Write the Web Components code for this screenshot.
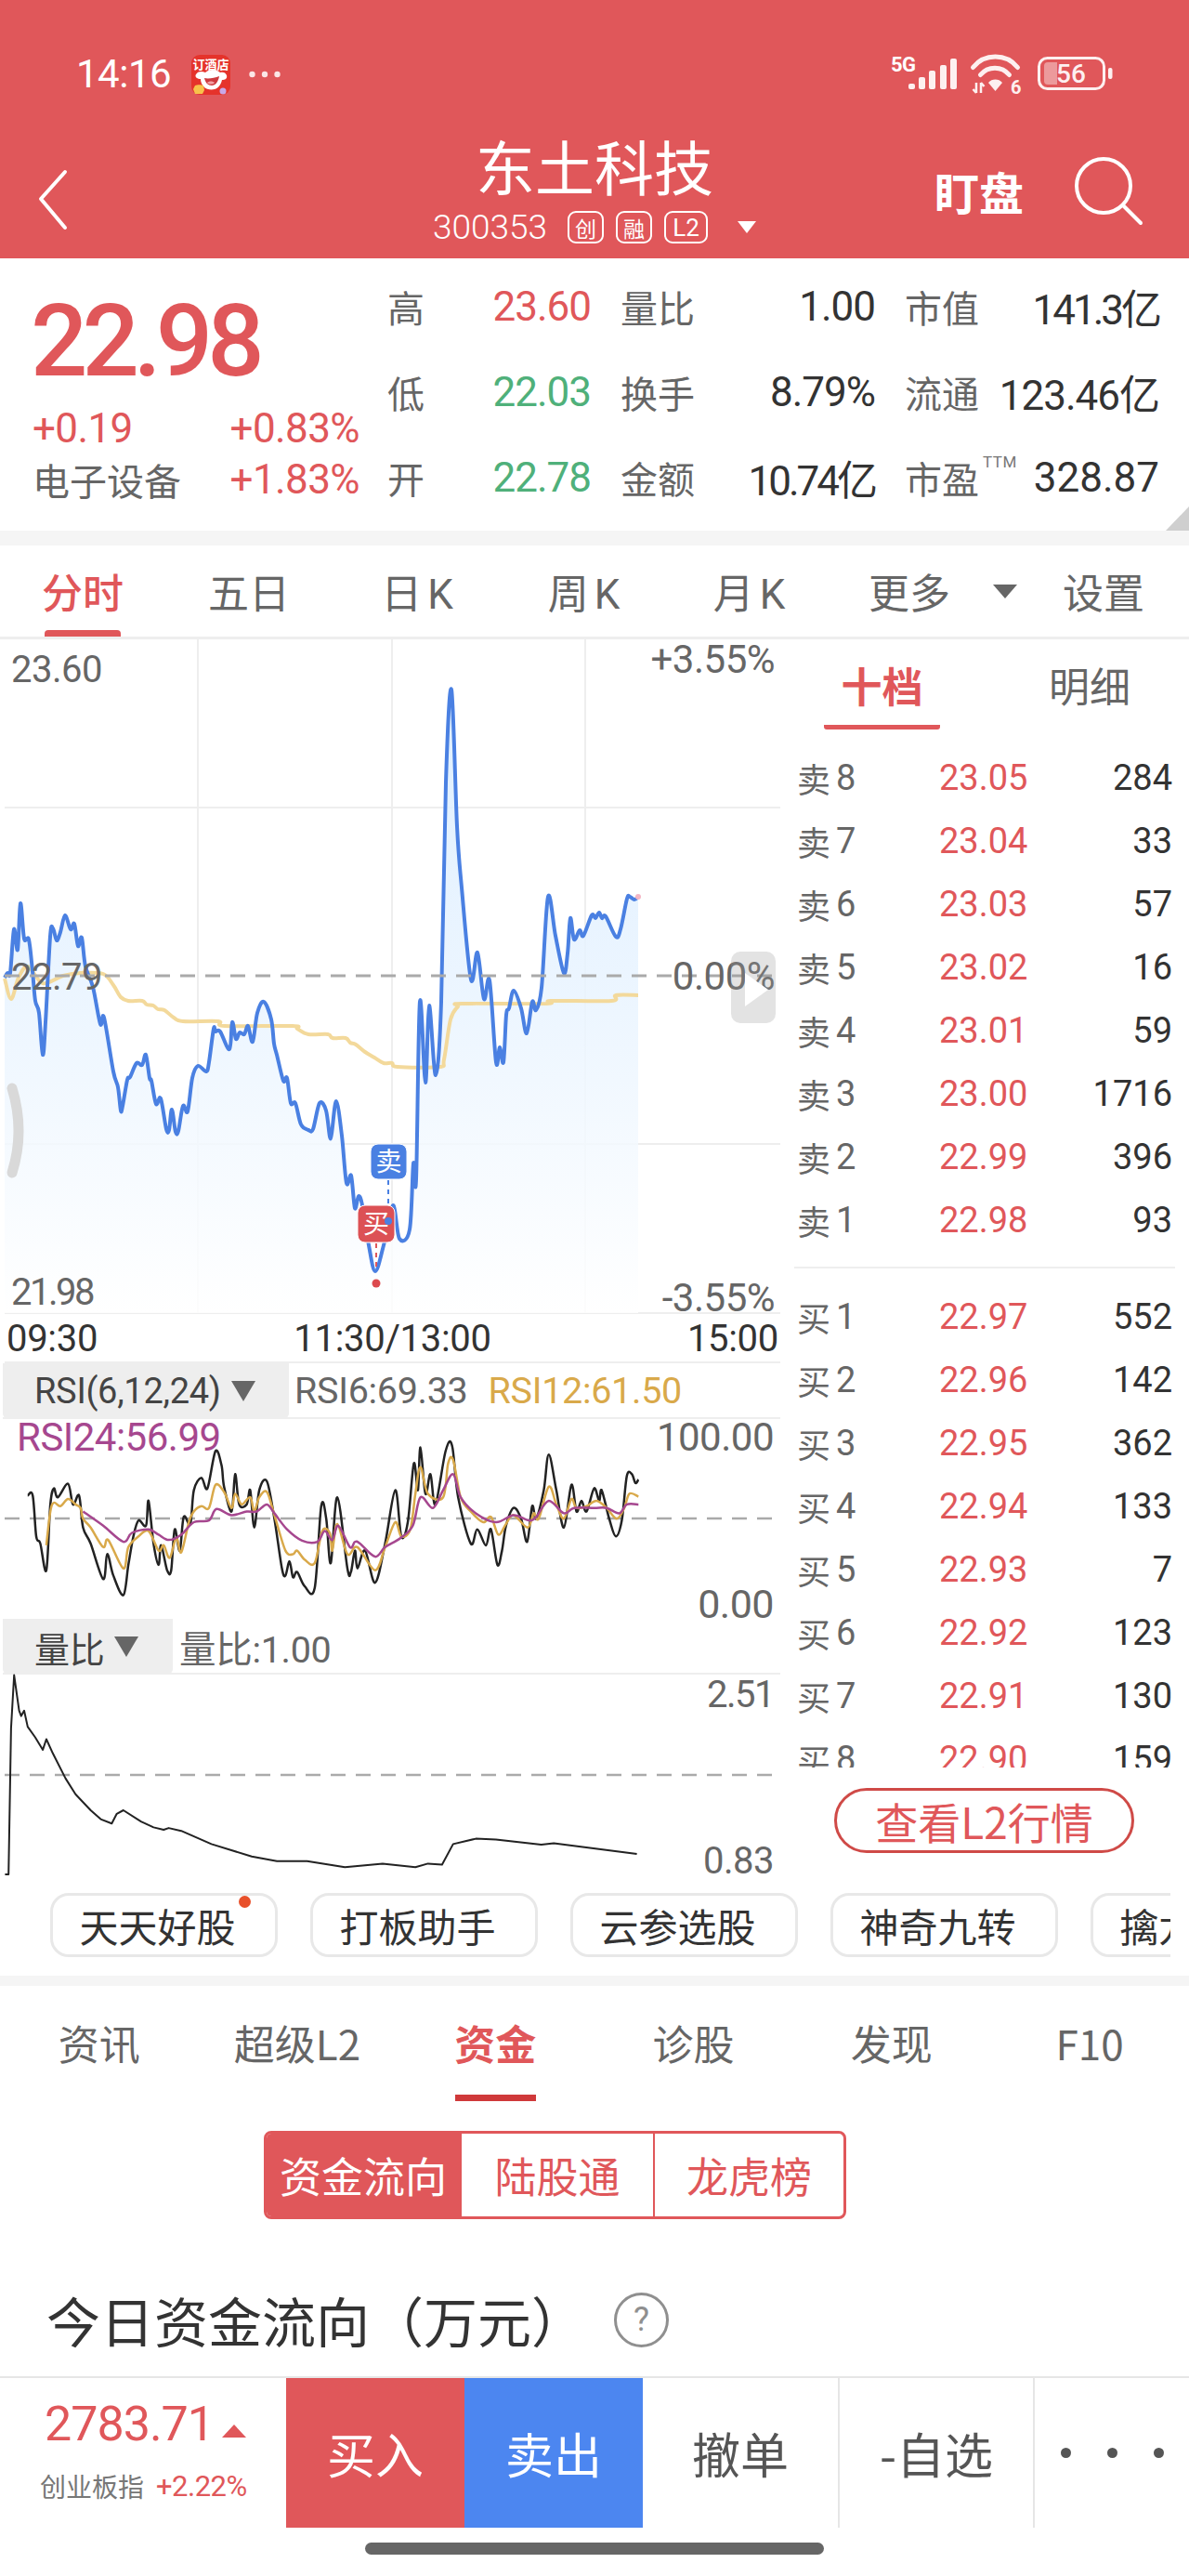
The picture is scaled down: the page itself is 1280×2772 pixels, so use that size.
<!DOCTYPE html>
<html lang="zh">
<head>
<meta charset="utf-8">
<title>东土科技</title>
<style>
  html, body { margin: 0; padding: 0; background: #fff; }
  body { width: 1280px; height: 2772px; overflow: hidden; font-family: Roboto, "Noto Sans CJK SC", sans-serif; color: #333; }
</style>
</head>
<body>
<stock-top></stock-top>
<quote-panel></quote-panel>
<period-tabs></period-tabs>
<chart-board>
  <price-chart slot="main"></price-chart>
  <time-axis slot="main"></time-axis>
  <indicator-panel slot="main" kind="rsi"></indicator-panel>
  <indicator-panel slot="main" kind="vol"></indicator-panel>
  <order-book slot="side"></order-book>
</chart-board>
<tool-chips>
  <tool-chip dot>天天好股</tool-chip>
  <tool-chip>打板助手</tool-chip>
  <tool-chip>云参选股</tool-chip>
  <tool-chip>神奇九转</tool-chip>
  <tool-chip>擒龙追涨</tool-chip>
</tool-chips>
<detail-tabs></detail-tabs>
<fund-section></fund-section>
<trade-bar></trade-bar>

<script>
const FONT = 'Roboto, "Noto Sans CJK SC", sans-serif';
const RED = '#E0575A';

// coordinates below were read off the reference, each curve in its own crop scale
const points = (raw, fx = v => v, fy = v => v) =>
  raw.trim().split(/\s+/).map(p => p.split(',').map(Number)).map(([x, y]) => [fx(x), fy(y)]);

// catmull-rom through the read points, the app draws its curves rounded
const smooth = pts => {
  let d = `M${pts[0][0].toFixed(1)} ${pts[0][1].toFixed(1)}`;
  for (let i = 0; i < pts.length - 1; i++) {
    const p0 = pts[i - 1] || pts[i], p1 = pts[i], p2 = pts[i + 1], p3 = pts[i + 2] || p2;
    const c1 = [p1[0] + (p2[0] - p0[0]) / 6, p1[1] + (p2[1] - p0[1]) / 6];
    const c2 = [p2[0] - (p3[0] - p1[0]) / 6, p2[1] - (p3[1] - p1[1]) / 6];
    d += `C${c1[0].toFixed(1)} ${c1[1].toFixed(1)} ${c2[0].toFixed(1)} ${c2[1].toFixed(1)} ${p2[0].toFixed(1)} ${p2[1].toFixed(1)}`;
  }
  return d;
};
const straight = pts => 'M' + pts.map(p => `${p[0].toFixed(1)} ${p[1].toFixed(1)}`).join('L');

const BLUE_LINE = `5,1052 8,1047 11,1047 15,1000 19,1022 22,972 26,1010 31,1011 35,1045 38,1077 42,1090 46,1135 49,1100 54,1008 57,999 61,1012 65,1003
 70,985 76,1000 80,994 84,1018 88,1009 92,1040 100,1062 108,1102 112,1095 122,1153 127,1170 130,1195 132,1190 137,1162 140,1159 147,1144 153,1146 157,1135
 161,1160 163,1163 168,1188 173,1182 179,1215 182,1216 185,1194 189,1218 192,1217 197,1190 202,1196 207,1160 213,1147 222,1153 225,1143 230,1107 232,1110
 237,1110 247,1129 250,1100 254,1118 258,1111 263,1113 267,1104 272,1121 277,1090 284,1078 292,1097 295,1123 298,1135 305,1163 309,1160 313,1187 318,1187
 324,1210 332,1216 337,1215 344,1187 351,1195 355,1223 357,1220 362,1185 368,1222 373,1273 378,1265 382,1300 386,1287 390,1297 397,1340 404,1368 413,1340
 423,1297 430,1333 441,1323 445,1252 448,1269 452,1078 458,1165 462,1082 469,1157 475,1078 480,842 486,742 492,889 497,955 507,1054 514,1025 521,1075
 527,1055 534,1143 538,1127 542,1143 545,1092 548,1085 553,1066 561,1085 567,1112 573,1078 577,1087 583,1063 590,965 598,1007 607,1047 611,1026 614,988
 618,1011 624,1001 628,1007 637,985 641,988 645,982 648,988 652,986 663,1008 668,1000 675,967 678,965 683,968 687,965`;

const AVG_LINE = `5,1053 12,1075 20,1052 30,1040 46,1058 68,1050 87,1047 111,1048 122,1060 130,1073 138,1077 153,1077 158,1081 165,1082 170,1086 177,1087 187,1095
 197,1099 235,1099 242,1104 315,1104 320,1107 332,1113 353,1113 358,1117 372,1117 377,1122 383,1124 393,1132 403,1138 413,1144 422,1144 428,1148 473,1148
 478,1140 485,1097 493,1083 497,1080 588,1080 593,1077 658,1077 663,1071 687,1071`;

const RSI6 = `55,445 65,445 72,560 80,580 92,655 100,470 107,425 115,450 135,412 145,470 157,445 165,535 180,580 205,680 213,610 225,670 245,725 255,640 265,560 275,515
 290,530 295,460 305,580 315,640 320,585 332,655 340,655 347,540 357,600 365,505 378,525 385,430 400,395 412,425 428,320 440,360 445,420 460,490 467,385 475,470
 490,470 497,430 505,535 515,430 530,405 545,510 560,650 567,670 575,630 582,675 590,660 605,700 625,705 638,475 648,510 657,635 670,450 690,650 697,660 705,600
 710,650 725,600 745,690 765,580 785,430 797,560 810,520 822,355 830,430 835,310 845,440 855,385 865,470 885,320 898,305 910,450 935,580 948,540 965,585 975,540
 988,640 997,600 1005,530 1020,480 1035,510 1047,575 1057,475 1065,510 1080,430 1090,330 1105,430 1120,535 1135,415 1145,490 1155,460 1165,490 1180,425 1190,460
 1195,430 1210,510 1223,560 1235,515 1245,390 1255,385 1262,410 1268,400`;
const RSI12 = `92,585 100,490 107,465 120,475 135,455 150,470 160,480 165,510 180,535 205,590 215,570 245,650 255,590 275,560 295,545 315,600 325,585 337,620 350,565 360,605
 375,520 385,490 400,475 415,480 428,415 445,435 460,480 467,440 480,470 497,450 505,490 515,450 530,435 545,500 567,600 582,610 590,600 605,625 625,635 640,545
 655,550 660,600 670,525 690,610 710,590 745,655 765,590 785,520 797,560 815,540 825,440 835,365 850,440 880,450 890,355 900,345 915,450 935,490 960,520 975,505
 990,555 1005,525 1020,500 1048,535 1060,495 1070,510 1090,420 1105,470 1120,510 1135,455 1145,480 1165,475 1185,460 1205,480 1225,510 1240,480 1250,440 1268,448`;
const RSI24 = `165,490 205,530 245,575 262,550 295,540 315,555 335,570 360,555 385,520 415,515 430,483 460,500 490,490 510,490 530,470 545,495 570,540 600,572 630,575 645,545
 660,570 672,530 695,590 705,575 715,580 745,617 765,590 795,565 820,530 835,450 860,480 880,430 900,385 915,450 945,495 985,520 1020,500 1050,515 1065,505 1090,460
 1120,495 1140,480 1180,480 1205,480 1230,495 1245,470 1268,470`;
const VOL = `10,1510 17,1510 22,1100 28,950 38,1050 42,1065 48,1050 55,1095 70,1125 85,1160 92,1130 105,1170 130,1240 150,1285 180,1330 200,1355 222,1367 232,1340 245,1330
 280,1362 305,1378 325,1385 335,1380 360,1388 420,1425 500,1460 550,1473 610,1473 685,1490 760,1480 825,1490 850,1480 878,1483 900,1425 945,1410 985,1412
 1075,1427 1100,1423 1265,1453`;

class StockTop extends HTMLElement {
  connectedCallback() {
    this.attachShadow({ mode: 'open' });
    this.shadowRoot.innerHTML = `
      <style>
        :host { display: block; background: ${RED}; color: #fff; height: 278px; font-family: ${FONT}; }
        .status { height: 140px; display: flex; justify-content: space-between; align-items: flex-start; padding: 58px 82px 0 82px; box-sizing: border-box; }
        .left, .right { display: flex; align-items: center; }
        .time { font-size: 42px; line-height: 44px; letter-spacing: -0.5px; }
        .app { margin-left: 22px; }
        .dots { margin-left: 20px; }
        svg { overflow: visible; }
        .nav { height: 138px; display: grid; grid-template-columns: 1fr auto 1fr; }
        .back { padding: 43px 0 0 41px; }
        .mid { display: flex; flex-direction: column; align-items: center; padding-top: 12px; }
        .title { font-size: 64px; line-height: 64px; }
        .code { display: flex; align-items: center; margin-top: 11px; height: 35px; }
        .code b { font-weight: 300; font-size: 37px; margin-right: 22px; }
        .tag { box-sizing: border-box; height: 35px; width: 39px; border: 2px solid #fff; border-radius: 9px; font-size: 23px; display: flex; align-items: center; justify-content: center; margin-right: 13px; }
        .tag.l2 { width: 47px; font-size: 26px; margin-right: 32px; }
        .tri { width: 0; height: 0; border-left: 10px solid transparent; border-right: 10px solid transparent; border-top: 13px solid #fff; }
        .act { display: flex; justify-content: flex-end; align-items: flex-start; padding: 29px 50px 0 0; }
        .watch { font-size: 48px; font-weight: 700; line-height: 56px; margin: 13px 55px 0 0; }
      </style>
      <div class="status">
        <div class="left">
          <span class="time">14:16</span>
          <svg class="app" width="42" height="43" viewBox="0 0 42 43">
            <rect width="42" height="43" rx="9" fill="#E5332B"/>
            <text x="21" y="15" font-size="13" fill="#fff" text-anchor="middle" font-family="Noto Sans CJK SC, sans-serif" font-weight="700">订酒店</text>
            <path d="M5 21c3-4 7-3 10-2 4-4 12-4 16 0 3-1 6 0 7 3 1 4-2 5-5 5-1 5-4 9-8 10-4 1-9 0-11-2-3-3-4-6-4-9-3 0-7-2-5-5z" fill="#fff"/>
            <path d="M14 25c4 1 11 0 16-2-1 6-4 10-8 10s-7-3-8-8z" fill="#CE3A3E"/>
            <path d="M17 30c2-2 6-2 8 0-2 2-6 2-8 0z" fill="#F3A0A4"/>
            <path d="M2 37l2-4c2-1 7-1 9 0l1 5-2 4H4z" fill="#F7C24B"/>
            <circle cx="34" cy="39" r="3.500" fill="#C9A8E8"/>
          </svg>
          <svg class="dots" width="34" height="8" viewBox="0 0 34 8"><circle cx="3.500" cy="4" r="3.200" fill="#FBE6E6"/><circle cx="17" cy="4" r="3.200" fill="#FBE6E6"/><circle cx="30.500" cy="4" r="3.200" fill="#FBE6E6"/></svg>
        </div>
        <div class="right">
          <svg width="239" height="44" viewBox="959 60 239 44" fill="none" stroke="#fff">
            <text x="959" y="79" font-size="22" font-weight="700" fill="#fff" stroke="none" font-family="Roboto, sans-serif" letter-spacing="-0.5">5G</text>
            <g fill="#FDF0F0" stroke="none">
              <rect x="978" y="92" width="7" height="6" rx="2"/>
              <rect x="989" y="85" width="7" height="13" rx="2"/>
              <rect x="1000" y="78" width="7" height="20" rx="2"/>
              <rect x="1012" y="72" width="7" height="26" rx="2"/>
              <rect x="1023" y="65" width="7" height="33" rx="2"/>
            </g>
            <g stroke="#FDF0F0" stroke-width="5" stroke-linecap="round">
              <path d="M1047.500 74.500a31 31 0 0 1 48 0"/>
              <path d="M1055.500 82.500a20 20 0 0 1 31 0"/>
            </g>
            <path d="M1064 91a10 10 0 0 1 15 0l-7.500 9z" fill="#FDF0F0" stroke="none"/>
            <path d="M1051 91v11M1047.500 98l3.500 4M1056 102V91M1056 91l3.500 4" stroke="#FDF0F0" stroke-width="2.500"/>
            <text x="1088" y="103" font-size="20" font-weight="700" fill="#FDF0F0" stroke="none" font-family="Roboto, sans-serif">6</text>
            <rect x="1118.500" y="64.500" width="70" height="33" rx="9" stroke="#FDF0F0" stroke-width="3"/>
            <path d="M1128 69h10v24h-10a4 4 0 0 1-4-4V73a4 4 0 0 1 4-4z" fill="#fff" fill-opacity=".4" stroke="none"/>
            <text x="1153" y="91" font-size="28" font-weight="500" text-anchor="middle" fill="#FDF0F0" stroke="none" font-family="Roboto, sans-serif">56</text>
            <rect x="1193" y="75" width="4.500" height="12" rx="2" fill="#FDF0F0" stroke="none"/>
          </svg>
        </div>
      </div>
      <div class="nav">
        <div class="back">
          <svg width="32" height="64" viewBox="0 0 32 64" fill="none" stroke="#fff" stroke-width="4" stroke-linecap="round" stroke-linejoin="round"><path d="M29 2L3 31l26 31"/></svg>
        </div>
        <div class="mid">
          <div class="title">东土科技</div>
          <div class="code"><b>300353</b><span class="tag">创</span><span class="tag">融</span><span class="tag l2">L2</span><span class="tri"></span></div>
        </div>
        <div class="act">
          <span class="watch">盯盘</span>
          <svg width="73" height="73" viewBox="0 0 73 73" fill="none" stroke="#fff" stroke-width="4" stroke-linecap="round"><circle cx="31" cy="31" r="29"/><path d="M52 52l19 19"/></svg>
        </div>
      </div>`;
  }
}

class QuotePanel extends HTMLElement {
  connectedCallback() {
    this.attachShadow({ mode: 'open' });
    const stat = (k, v, c = '') => `<div class="cell"><span class="k">${k}</span><span class="v ${c}">${v}</span></div>`;
    this.shadowRoot.innerHTML = `
      <style>
        :host { display: block; position: relative; height: 293px; box-sizing: border-box; font-family: ${FONT}; background: #fff; }
        .wrap { display: grid; grid-template-columns: 352px 1fr; padding-left: 35px; }
        .price { font-size: 108px; line-height: 96px; font-weight: 500; color: ${RED}; letter-spacing: -6px; margin-top: 41px; margin-left: -2px; }
        .sub { display: flex; justify-content: space-between; align-items: center; color: ${RED}; font-size: 44px; letter-spacing: -0.6px; height: 44px; }
        .sub.one { margin-top: 24px; }
        .sub.two { margin-top: 11px; }
        .sub .cn { color: #666; font-family: "Noto Sans CJK SC", sans-serif; letter-spacing: 0; font-size: 40px; }
        .stats { display: grid; grid-template-columns: 219px 274px 274px; column-gap: 32px; grid-auto-rows: 92px; margin: 6px 0 0 30px; }
        .cell { display: flex; justify-content: space-between; align-items: center; }
        .k { font-family: "Noto Sans CJK SC", sans-serif; font-size: 40px; color: #666; position: relative; white-space: nowrap; }
        .k sup { position: absolute; left: 84px; top: 2px; font-size: 17px; font-family: Roboto, sans-serif; line-height: 20px; color: #777; letter-spacing: .5px; }
        .v { font-size: 44px; letter-spacing: -1px; color: #333; white-space: nowrap; }
        .v.up { color: ${RED}; }
        .v.dn { color: #4FB07A; }
        .v.tight { letter-spacing: -3px; }
        .v.wide { letter-spacing: 0; }
        .corner { position: absolute; right: 0; bottom: 0; width: 0; height: 0; border-left: 25px solid transparent; border-bottom: 26px solid #CFCFCF; }
      </style>
      <div class="wrap">
        <div>
          <div class="price">22.98</div>
          <div class="sub one"><span>+0.19</span><span>+0.83%</span></div>
          <div class="sub two"><span class="cn">电子设备</span><span>+1.83%</span></div>
        </div>
        <div class="stats">
          ${stat('高', '23.60', 'up')}${stat('量比', '1.00')}${stat('市值', '141.3亿', 'tight')}
          ${stat('低', '22.03', 'dn')}${stat('换手', '8.79%')}${stat('流通', '123.46亿')}
          ${stat('开', '22.78', 'dn')}${stat('金额', '10.74亿', 'tight')}${stat('市盈<sup>TTM</sup>', '328.87', 'wide')}
        </div>
      </div>
      <div class="corner"></div>`;
  }
}

class PeriodTabs extends HTMLElement {
  connectedCallback() {
    this.attachShadow({ mode: 'open' });
    this.shadowRoot.innerHTML = `
      <style>
        :host { display: block; border-top: 16px solid #F5F5F5; border-bottom: 3px solid #EEE; height: 98px; background: #fff; font-family: Roboto, "Noto Sans CJK SC", sans-serif; }
        .row { display: grid; grid-template-columns: 178px 180px 182px 177px 179px 238px 108px; height: 98px; }
        .t { display: flex; align-items: center; justify-content: center; font-size: 44px; color: #666; height: 98px; position: relative; }
        .t .k { margin-left: 6px; }
        .t.on { color: ${RED}; font-weight: 500; }
        .t.on::after { content: ""; position: absolute; left: 48px; width: 82px; top: 91px; height: 7px; border-radius: 4px 4px 0 0; background: ${RED}; }
        .tri { width: 0; height: 0; border-left: 13px solid transparent; border-right: 13px solid transparent; border-top: 15px solid #666; margin-left: 46px; }
      </style>
      <div class="row">
        <div class="t on">分时</div>
        <div class="t">五日</div>
        <div class="t"><span>日<span class="k">K</span></span></div>
        <div class="t"><span>周<span class="k">K</span></span></div>
        <div class="t"><span>月<span class="k">K</span></span></div>
        <div class="t">更多<span class="tri"></span></div>
        <div class="t">设置</div>
      </div>`;
  }
}

class ChartBoard extends HTMLElement {
  connectedCallback() {
    this.attachShadow({ mode: 'open' });
    this.shadowRoot.innerHTML = `
      <style>
        :host { display: grid; grid-template-columns: 840px 440px; height: 1332px; background: #fff; }
        .main, .side { display: block; min-width: 0; }
      </style>
      <div class="main"><slot name="main"></slot></div>
      <div class="side"><slot name="side"></slot></div>`;
  }
}

class PriceChart extends HTMLElement {
  connectedCallback() {
    this.attachShadow({ mode: 'open' });
    const blue = smooth(points(BLUE_LINE));
    const avg = smooth(points(AVG_LINE));
    this.shadowRoot.innerHTML = `
      <style>
        :host { display: block; height: 727px; }
        svg { display: block; overflow: visible; }
        text { font-family: ${FONT}; font-size: 40px; fill: #666; letter-spacing: -0.5px; }
        .r { font-size: 42px; }
        .cn { font-family: "Noto Sans CJK SC", sans-serif; font-size: 28px; fill: #fff; letter-spacing: 0; }
      </style>
      <svg width="840" height="727" viewBox="0 688 840 727">
        <defs>
          <linearGradient id="fade" gradientUnits="userSpaceOnUse" x1="0" y1="742" x2="0" y2="1413">
            <stop offset="0" stop-color="#D9ECFE"/><stop offset=".5" stop-color="#E9F4FF"/><stop offset="1" stop-color="#FFFFFF"/>
          </linearGradient>
        </defs>
        <g stroke="#EEEEEE" stroke-width="2">
          <path d="M213 688V1413M422 688V1413M630 688V1413"/>
          <path d="M5 869H840M5 1231H840M5 1413H840"/>
        </g>
        <path d="${blue}L687 1413L5 1413Z" fill="url(#fade)" fill-opacity=".85"/>
        <path d="${avg}" fill="none" stroke="#F3D99B" stroke-width="4" stroke-linejoin="round"/>
        <path d="${blue}" fill="none" stroke="#4A80E2" stroke-width="4" stroke-linejoin="round"/>
        <circle cx="687" cy="965" r="3" fill="#F4B6C4"/>
        <path d="M5 1050H840" stroke="#AAAAAA" stroke-width="3" stroke-dasharray="16 11"/>
        <text x="12" y="734">23.60</text>
        <text class="r" x="834" y="724" text-anchor="end">+3.55%</text>
        <text x="12" y="1065">22.79</text>
        <text class="r" x="834" y="1065" text-anchor="end">0.00%</text>
        <text x="12" y="1404" style="letter-spacing:-2.5px">21.98</text>
        <text class="r" x="834" y="1411" text-anchor="end">-3.55%</text>
        <rect x="787" y="1024" width="48" height="77" rx="10" fill="#999" fill-opacity=".28"/>
        <path d="M802 1047l25 18-25 18z" fill="#fff"/>
        <path d="M13 1171Q27 1217 13 1262" fill="none" stroke="#D9D9D9" stroke-width="11" stroke-linecap="round"/>
        <path d="M418 1270V1312" stroke="#4A80E2" stroke-width="2" stroke-dasharray="5 5"/>
        <rect x="399" y="1231" width="39" height="38" rx="8" fill="#4A80E2" stroke="#fff" stroke-width="1"/>
        <text class="cn" x="418.500" y="1260" text-anchor="middle">卖</text>
        <path d="M405 1338V1368" stroke="${RED}" stroke-width="2" stroke-dasharray="5 5"/>
        <rect x="385" y="1297" width="40" height="40" rx="8" fill="#DC5155" stroke="#fff" stroke-width="1"/>
        <text class="cn" x="405" y="1327" text-anchor="middle">买</text>
        <circle cx="418" cy="1314" r="4" fill="#4A80E2"/>
        <circle cx="405" cy="1381" r="4.500" fill="#DC4A4E"/>
      </svg>`;
  }
}

class TimeAxis extends HTMLElement {
  connectedCallback() {
    this.attachShadow({ mode: 'open' });
    this.shadowRoot.innerHTML = `
      <style>
        :host { display: flex; justify-content: space-between; align-items: center; height: 52px; box-sizing: border-box; padding: 0 2px 0 2px; margin-left: 5px; font: 40px ${FONT}; color: #333; letter-spacing: -0.3px; border-bottom: 2px solid #EEE; }
        span:first-child { font-size: 42px; margin-left: -1px; }
      </style>
      <span>09:30</span><span>11:30/13:00</span><span>15:00</span>`;
  }
}

class IndicatorPanel extends HTMLElement {
  connectedCallback() {
    this.attachShadow({ mode: 'open' });
    const fx = x => x / 1.845;
    const fy = y => 1440 + y / 2.613;
    const curve = raw => smooth(points(raw, fx, fy));
    const rsi = this.getAttribute('kind') === 'rsi';
    const body = rsi ? `
      <svg width="840" height="215" viewBox="0 1528 840 215">
        <path d="M5 1635H840" stroke="#AAA" stroke-width="2.500" stroke-dasharray="16 11"/>
        <path d="${curve(RSI6)}" fill="none" stroke="#222" stroke-width="2.500"/>
        <path d="${curve(RSI12)}" fill="none" stroke="#D9A94A" stroke-width="2.500"/>
        <path d="${curve(RSI24)}" fill="none" stroke="#A6478F" stroke-width="2.500"/>
        <text x="18" y="1562" fill="#A6478F" style="font-size:42px">RSI24:56.99</text>
        <text x="833" y="1562" text-anchor="end" fill="#666" style="font-size:42px">100.00</text>
        <text x="833" y="1742" text-anchor="end" fill="#666" style="font-size:43px">0.00</text>
      </svg>` : `
      <svg width="840" height="216" viewBox="0 1803 840 216">
        <path d="M5 1911H840" stroke="#AAA" stroke-width="2.500" stroke-dasharray="16 11"/>
        <path d="${straight(points(VOL, fx, fy))}" fill="none" stroke="#222" stroke-width="2" stroke-linejoin="round"/>
        <text x="833" y="1838" text-anchor="end" fill="#666" style="letter-spacing:-1.500px">2.51</text>
        <text x="833" y="2017" text-anchor="end" fill="#666">0.83</text>
      </svg>`;
    const head = rsi
      ? `<span class="pill" style="width:308px">RSI(6,12,24)<i></i></span><span class="txt" style="margin-left:6px">RSI6:69.33</span><span class="txt" style="margin-left:22px;color:#D9A94A">RSI12:61.50</span>`
      : `<span class="pill" style="width:183px;font-family:'Noto Sans CJK SC',sans-serif">量比<i></i></span><span class="txt" style="margin-left:7px"><span class="cn">量比</span>:1.00</span>`;
    this.shadowRoot.innerHTML = `
      <style>
        :host { display: block; font-family: ${FONT}; }
        .head { height: 58px; display: flex; align-items: flex-start; border-bottom: 2px solid #EEE; margin-left: 3px; }
        .pill { box-sizing: border-box; height: 60px; background: #EEE; border-radius: 0 0 6px 6px; display: flex; align-items: center; font-size: 38px; color: #444; padding-left: 34px; letter-spacing: -0.3px; flex: none; }
        .pill i { display: inline-block; margin-left: 11px; width: 0; height: 0; border-left: 13px solid transparent; border-right: 13px solid transparent; border-top: 22px solid #666; }
        .txt { font-size: 39.5px; line-height: 60px; color: #666; letter-spacing: -0.3px; }
        .cn { font-family: "Noto Sans CJK SC", sans-serif; }
        svg { display: block; overflow: visible; }
        text { font-size: 40px; font-family: ${FONT}; letter-spacing: -0.5px; }
      </style>
      <div class="head">${head}</div>
      ${body}`;
  }
}

class OrderBook extends HTMLElement {
  connectedCallback() {
    this.attachShadow({ mode: 'open' });
    const sell = [['8','23.05','284'],['7','23.04','33'],['6','23.03','57'],['5','23.02','16'],['4','23.01','59'],['3','23.00','1716'],['2','22.99','396'],['1','22.98','93']];
    const buy = [['1','22.97','552'],['2','22.96','142'],['3','22.95','362'],['4','22.94','133'],['5','22.93','7'],['6','22.92','123'],['7','22.91','130'],['8','22.90','159']];
    const row = (side, [n, p, q]) => `<div class="row"><span class="lbl"><span class="cn">${side}</span>${n}</span><span class="p">${p}</span><span class="q">${q}</span></div>`;
    this.shadowRoot.innerHTML = `
      <style>
        :host { display: block; font-family: ${FONT}; }
        .head { display: flex; height: 97px; box-sizing: border-box; padding-left: 47px; }
        .tab { width: 125px; text-align: center; font: 44px/98px "Noto Sans CJK SC", sans-serif; color: #666; height: 97px; box-sizing: border-box; }
        .tab.on { color: ${RED}; font-weight: 700; border-bottom: 5px solid ${RED}; border-radius: 0 0 3px 3px; }
        .tab.off { margin-left: 117px; width: 84px; white-space: nowrap; }
        .list { padding: 18px 18px 0; }
        .row { display: grid; grid-template-columns: 153px 1fr auto; height: 68px; align-items: center; font-size: 38px; }
        .lbl { color: #666; display: flex; align-items: center; }
        .lbl .cn { font: 36px "Noto Sans CJK SC", sans-serif; margin-right: 6px; }
        .p { color: ${RED}; }
        .q { color: #333; }
        .sep { height: 2px; background: #EEE; margin: 16px -3px 18px; }
        .buys { height: 519px; overflow: hidden; }
        .more { box-sizing: border-box; display: flex; align-items: center; justify-content: center; width: 323px; height: 70px; margin: 22px 0 0 58px; border: 3px solid #CF4A47; border-radius: 35px; color: ${RED}; font: 46px "Noto Sans CJK SC", sans-serif; white-space: nowrap; }
      </style>
      <div class="head"><div class="tab on">十档</div><div class="tab off">明细</div></div>
      <div class="list">
        ${sell.map(r => row('卖', r)).join('')}
        <div class="sep"></div>
        <div class="buys">${buy.map(r => row('买', r)).join('')}</div>
      </div>
      <div class="more">查看L2行情</div>`;
  }
}

class ToolChips extends HTMLElement {
  connectedCallback() {
    this.attachShadow({ mode: 'open' });
    this.shadowRoot.innerHTML = `
      <style>
        :host { display: block; height: 117px; width: 1280px; box-sizing: border-box; border-bottom: 11px solid #F5F5F5; background: #fff; padding-top: 17px; }
        .track { display: flex; gap: 35px; padding-left: 54px; width: 1206px; overflow: hidden; }
      </style>
      <div class="track"><slot></slot></div>`;
  }
}

class ToolChip extends HTMLElement {
  connectedCallback() {
    this.attachShadow({ mode: 'open' });
    const dot = this.hasAttribute('dot') ? '<span class="dot"></span>' : '';
    this.shadowRoot.innerHTML = `
      <style>
        :host { flex: 0 0 245px; box-sizing: border-box; height: 69px; padding-right: 14px; border: 3px solid #E8E8E8; border-radius: 20px; display: flex; align-items: center; justify-content: center; font: 42px "Noto Sans CJK SC", sans-serif; color: #333; position: relative; white-space: nowrap; }
        .dot { position: absolute; left: 200px; top: 0; width: 13px; height: 13px; border-radius: 50%; background: #E8502A; }
      </style>
      <slot></slot>${dot}`;
  }
}

class DetailTabs extends HTMLElement {
  connectedCallback() {
    this.attachShadow({ mode: 'open' });
    const names = ['资讯', '超级L2', '资金', '诊股', '发现', 'F10'];
    this.shadowRoot.innerHTML = `
      <style>
        :host { display: grid; grid-template-columns: repeat(6, 213.3px); height: 125px; font: 44px "Noto Sans CJK SC", sans-serif; color: #666; background: #fff; }
        .t { display: flex; flex-direction: column; align-items: center; padding-top: 30px; box-sizing: border-box; line-height: 62px; white-space: nowrap; }
        .t.on { color: ${RED}; font-weight: 700; }
        .t.on i { display: block; width: 87px; height: 7px; background: #D0393A; margin-top: 25px; }
      </style>
      ${names.map((n, i) => `<div class="t ${i === 2 ? 'on' : ''}">${n}${i === 2 ? '<i></i>' : ''}</div>`).join('')}`;
  }
}

class FundSection extends HTMLElement {
  connectedCallback() {
    this.attachShadow({ mode: 'open' });
    this.shadowRoot.innerHTML = `
      <style>
        :host { display: block; height: 295px; box-sizing: border-box; padding-top: 31px; background: #fff; font-family: "Noto Sans CJK SC", sans-serif; }
        .seg { display: grid; grid-template-columns: 208px 208px 205px; width: 627px; height: 95px; margin-left: 284px; box-sizing: border-box; border: 3px solid ${RED}; border-radius: 8px; overflow: hidden; }
        .seg span { display: flex; align-items: center; justify-content: center; font-size: 45px; color: ${RED}; white-space: nowrap; }
        .seg span + span { border-left: 2px solid ${RED}; }
        .seg .on { background: ${RED}; color: #fff; }
        .title { display: flex; align-items: center; margin: 78px 0 0 50px; font-size: 58px; line-height: 60px; color: #333; }
        .q { width: 59px; height: 59px; box-sizing: border-box; border: 3px solid #8F8F8F; border-radius: 50%; margin-left: 31px; display: flex; align-items: center; justify-content: center; font: 36px Roboto, sans-serif; color: #8F8F8F; }
      </style>
      <div class="seg"><span class="on">资金流向</span><span>陆股通</span><span>龙虎榜</span></div>
      <div class="title"><span>今日资金流向（万元）</span><span class="q">?</span></div>`;
  }
}

class TradeBar extends HTMLElement {
  connectedCallback() {
    this.attachShadow({ mode: 'open' });
    this.shadowRoot.innerHTML = `
      <style>
        :host { display: block; height: 215px; background: #fff; font-family: "Noto Sans CJK SC", sans-serif; }
        .bar { display: grid; grid-template-columns: 308px 192px 192px 212px 210px 1fr; height: 163px; border-top: 2px solid #E6E6E6; box-sizing: border-box; }
        .idx { padding: 22px 0 0 43px; box-sizing: border-box; }
        .num { font: 52px/56px Roboto, sans-serif; letter-spacing: -1px; color: ${RED}; display: flex; align-items: center; margin-left: 5px; }
        .num i { width: 0; height: 0; margin: 14px 0 0 9px; border-left: 13px solid transparent; border-right: 13px solid transparent; border-bottom: 14px solid ${RED}; }
        .sub { display: flex; align-items: center; margin-top: 18px; font-size: 28px; color: #777; white-space: nowrap; }
        .sub b { font: 400 31px Roboto, sans-serif; color: ${RED}; margin-left: 13px; letter-spacing: -0.5px; }
        .btn { display: flex; align-items: center; justify-content: center; font-size: 52px; color: #555; white-space: nowrap; }
        .buy { background: ${RED}; color: #fff; }
        .sell { background: #4C86F0; color: #fff; }
        .line { border-right: 2px solid #E6E6E6; }
        .dots { display: flex; gap: 39px; align-items: center; padding: 0 0 0 28px; }
        .dots i { width: 11px; height: 11px; border-radius: 50%; background: #555; }
        .home { width: 494px; height: 13px; border-radius: 7px; background: #666; margin: 16px 0 0 393px; }
      </style>
      <div class="bar">
        <div class="idx">
          <div class="num">2783.71<i></i></div>
          <div class="sub">创业板指<b>+2.22%</b></div>
        </div>
        <div class="btn buy">买入</div>
        <div class="btn sell">卖出</div>
        <div class="btn line">撤单</div>
        <div class="btn line">-自选</div>
        <div class="dots"><i></i><i></i><i></i></div>
      </div>
      <div class="home"></div>`;
  }
}

customElements.define('stock-top', StockTop);
customElements.define('quote-panel', QuotePanel);
customElements.define('period-tabs', PeriodTabs);
customElements.define('chart-board', ChartBoard);
customElements.define('price-chart', PriceChart);
customElements.define('time-axis', TimeAxis);
customElements.define('indicator-panel', IndicatorPanel);
customElements.define('order-book', OrderBook);
customElements.define('tool-chips', ToolChips);
customElements.define('tool-chip', ToolChip);
customElements.define('detail-tabs', DetailTabs);
customElements.define('fund-section', FundSection);
customElements.define('trade-bar', TradeBar);
</script>
</body>
</html>
